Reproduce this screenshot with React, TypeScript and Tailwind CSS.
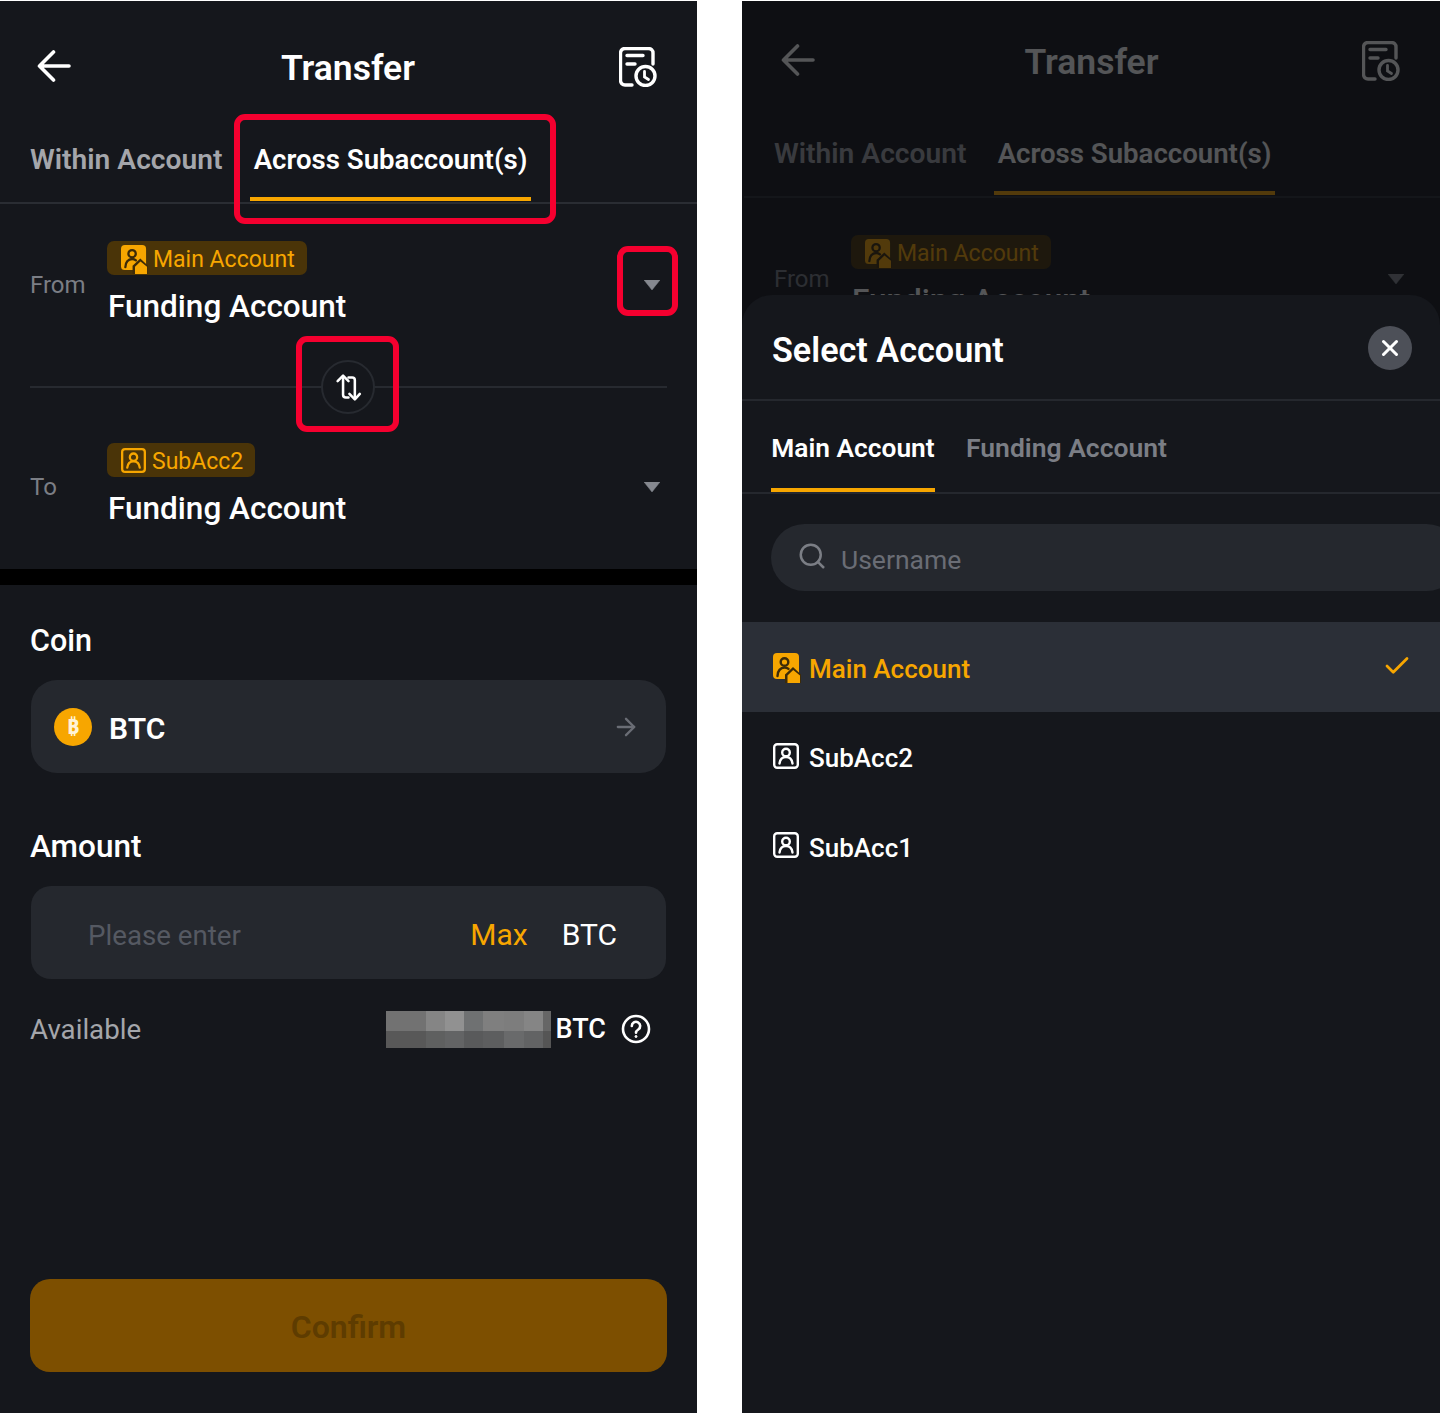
import React from 'react';
import { ArrowRight, Check, Search, X } from 'lucide-react';

const font = { fontFamily: 'Roboto, "Noto Sans", sans-serif' };

function MainAccountIcon({ className = '' }: { className?: string }) {
  return (
    <svg viewBox="0 0 28 30" className={className} fill="none">
      <rect x="0" y="0" width="26" height="26" rx="4" fill="#f7a600" />
      <circle cx="11.5" cy="9" r="3.8" stroke="#3d2b08" strokeWidth="2.4" />
      <path d="M4.5 23c0-5 3-8.500 7-8.500 1.600 0 3 .5 4 1.400" stroke="#3d2b08" strokeWidth="2.4" strokeLinecap="round" />
      <path d="M12 21.500 20 14l8 7.500V30H12z" fill="#3d2b08" />
      <path d="M14.500 22.500 20.200 17 27 22.500V30H14.500z" fill="#f7a600" />
    </svg>
  );
}

function SubAccountIcon({ className = '' }: { className?: string }) {
  return (
    <svg viewBox="0 0 26 26" className={className} fill="none" stroke="currentColor" strokeWidth="2.4">
      <rect x="1.2" y="1.2" width="23.6" height="23.6" rx="3" />
      <circle cx="13" cy="9.5" r="3.8" />
      <path d="M6.500 20.500c.5-4 3-6.500 6.500-6.500s6 2.500 6.500 6.500" strokeLinecap="round" />
    </svg>
  );
}

function HistoryIcon({ className = '' }: { className?: string }) {
  return (
    <svg viewBox="0 0 38 40" className={className} fill="none" stroke="currentColor" strokeWidth="3.4">
      <path d="M13 38H6a4.500 4.500 0 0 1-4.500-4.500V6A4.500 4.500 0 0 1 6 1.500h23.500A4.500 4.500 0 0 1 34 6v11" strokeLinecap="round" />
      <path d="M8 8.500h16M8 17h8" strokeLinecap="round" />
      <circle cx="26.500" cy="29" r="9.500" />
      <path d="M25.500 24.500V30l4 2.500" strokeWidth="2.800" strokeLinecap="round" />
    </svg>
  );
}

function BackArrow() {
  return (
    <svg viewBox="0 0 34 32" className="w-[34px] h-[32px] -mt-[2px]" fill="none" stroke="currentColor" strokeWidth="3.6" strokeLinecap="round" strokeLinejoin="round">
      <path d="M32 16H3M16.500 2 2.500 16l14 14" />
    </svg>
  );
}

function SwapIcon() {
  return (
    <svg viewBox="0 0 32 32" className="w-[29px] h-[29px]" fill="none" stroke="#fff" strokeWidth="2.800" strokeLinecap="round" strokeLinejoin="round">
      <path d="M4 9l6-6 6 6" />
      <path d="M10 4v20c0 2 1 3 3 3h3" />
      <path d="M17 23l6 6 5.500-6" />
      <path d="M23 28V8c0-2-1-3-3-3h-4" />
    </svg>
  );
}

function Triangle() {
  return (
    <svg viewBox="0 0 16 10" className="w-[16px] h-[10px]">
      <path d="M0 0h16L8 10z" fill="#85888f" stroke="#85888f" strokeWidth="0.5" />
    </svg>
  );
}

function RedBox({ className }: { className: string }) {
  return <div className={`absolute border-[6px] border-[#f5002f] rounded-[11px] ${className}`} />;
}

function AccountRow({
  label,
  badge,
  main,
  nameClass,
}: {
  label: string;
  badge: string;
  main?: boolean;
  nameClass: string;
}) {
  return (
    <div className="flex pl-[30px] pr-[37px] relative h-[96px]">
      <div className="w-[77px] pt-[30px] text-[24px] leading-[28px] text-[#7b7e85]">{label}</div>
      <div className="flex-1">
        <div className="inline-flex items-center h-[34px] pl-[14px] pr-[12px] rounded-[7px] bg-[#4a3408] text-[#f7a600] text-[23px] leading-none">
          {main ? (
            <MainAccountIcon className="w-[27px] h-[29px] mr-[5px] mt-[3px]" />
          ) : (
            <SubAccountIcon className="w-[25px] h-[25px] mr-[6px]" />
          )}
          <span className="mt-[3px]">{badge}</span>
        </div>
        <div className={`ml-px text-[31.500px] leading-[36px] font-medium text-white ${nameClass}`}>Funding Account</div>
      </div>
      <div className="pt-[39px]">
        <Triangle />
      </div>
    </div>
  );
}

function TopSection({ top }: { top: string }) {
  return (
    <>
      <div className={`flex items-center justify-between pl-[37px] pr-[40px] h-[66px] text-white ${top}`}>
        <BackArrow />
        <div className="text-[35.500px] font-semibold leading-none ml-[6px] mt-[3px]">Transfer</div>
        <HistoryIcon className="w-[38px] h-[40px]" />
      </div>
      <div className="flex h-[89px] mt-[15px] pl-[30px] border-b-2 border-[#2a2d33]">
        <div className="w-[220px] pt-[29px] text-[28.200px] leading-[32px] font-semibold text-[#a4a6ab]">Within Account</div>
        <div className="w-[281px] pt-[29px] text-center border-b-[4px] border-[#f7a600] mb-[1px] text-[27.600px] leading-[32px] font-semibold text-white">
          Across Subaccount(s)
        </div>
      </div>
    </>
  );
}

function Mosaic() {
  const top = ['bg-[#727272]', 'bg-[#858585]', 'bg-[#919191]', 'bg-[#6f7172]', 'bg-[#7f7f7f]', 'bg-[#7d7d7d]', 'bg-[#858585]', 'bg-[#666666]'];
  const bottom = ['bg-[#585858]', 'bg-[#5f6060]', 'bg-[#636465]', 'bg-[#595a5b]', 'bg-[#5d5e5f]', 'bg-[#696a6b]', 'bg-[#626364]', 'bg-[#555555]'];
  return (
    <div className="grid grid-cols-[40px_19px_19px_19px_21px_20px_19px_8px] grid-rows-[20px_17px] w-[165px] h-[37px]">
      {[...top, ...bottom].map((c, i) => (
        <div key={i} className={c} />
      ))}
    </div>
  );
}

function SheetRow({ name, selected }: { name: string; selected?: boolean }) {
  return (
    <div className={`flex items-center h-[89.500px] pl-[31px] pr-[28px] ${selected ? 'bg-[#2b2f37]' : ''}`}>
      {selected ? (
        <MainAccountIcon className="w-[28px] h-[30px] mr-[8px] mt-[2px]" />
      ) : (
        <SubAccountIcon className="w-[26px] h-[26px] mr-[10px] mb-[1px] text-white" />
      )}
      <span className={`text-[26px] font-medium mt-[5px] ${selected ? 'text-[#f7a600]' : 'text-white'}`}>{name}</span>
      {selected && <Check size={30} strokeWidth={2.2} color="#f7a600" className="ml-auto mb-[2px]" />}
    </div>
  );
}

export default function App() {
  return (
    <div style={font} className="w-[1440px] h-[1414px] bg-white flex justify-between overflow-hidden">
      {/* left screen */}
      <div className="relative w-[697px] h-[1412px] mt-px bg-[#15171c]">
        <TopSection top="mt-[33px]" />
        <RedBox className="left-[234px] top-[113px] w-[322px] h-[110px]" />

        <div className="pt-[37px]">
          <AccountRow label="From" badge="Main Account" main nameClass="mt-[8px]" />
        </div>
        <RedBox className="left-[617px] top-[245px] w-[61px] h-[70px]" />

        <div className="relative mx-[30px] mt-[49px] h-[2px] bg-[#272a30]">
          <div className="absolute left-[291px] top-[-26px] w-[54px] h-[54px] rounded-full border-2 border-[#272a30] bg-[#15171c] flex items-center justify-center">
            <SwapIcon />
          </div>
        </div>
        <RedBox className="left-[296px] top-[335px] w-[103px] h-[96px]" />

        <div className="pt-[55px]">
          <AccountRow label="To" badge="SubAcc2" nameClass="mt-[11px]" />
        </div>

        <div className="mt-[30px] h-[16px] bg-black" />

        <div className="px-[30px]">
          <div className="pt-[38px] text-[30.500px] leading-[36px] font-medium text-white">Coin</div>
          <div className="mt-[21px] ml-px mr-[1px] h-[93px] rounded-[26px] bg-[#25282e] flex items-center pl-[23px] pr-[26px]">
            <div className="w-[38px] h-[38px] rounded-full bg-[#f7a600] flex items-center justify-center text-[#fff3d6] font-bold text-[22px] leading-none">
              ₿
            </div>
            <div className="ml-[17px] mt-[3px] text-[30px] font-semibold text-white">BTC</div>
            <ArrowRight size={28} strokeWidth={2} color="#6a6d75" className="ml-auto" />
          </div>

          <div className="mt-[56px] text-[31.500px] leading-[36px] font-medium text-white">Amount</div>
          <div className="mt-[21px] ml-px mr-[1px] h-[93px] rounded-[20px] bg-[#25282e] flex items-center pl-[57px] pr-[49px]">
            <div className="text-[27.700px] text-[#555962] mt-[7px]">Please enter</div>
            <div className="ml-auto mt-[3px] text-[30px] text-[#f7a600]">Max</div>
            <div className="ml-[34px] mt-[3px] text-[30px] text-white">BTC</div>
          </div>

          <div className="mt-[32px] flex items-center h-[37px]">
            <div className="text-[27.700px] text-[#a4a6ab]">Available</div>
            <div className="ml-auto">
              <Mosaic />
            </div>
            <div className="ml-[5px] text-[27px] font-medium text-white">BTC</div>
            <svg viewBox="0 0 30 30" className="w-[30px] h-[30px] ml-[15px] mr-[16px] -mt-[2px]" fill="none" stroke="#fff" strokeWidth="2.600">
              <circle cx="15" cy="15" r="13" />
              <path d="M10.800 12a4.200 4.200 0 1 1 6.500 3.500c-1.500 1-2.300 1.700-2.300 3.200" strokeLinecap="round" />
              <circle cx="15" cy="22.500" r="1" fill="#fff" strokeWidth="1" />
            </svg>
          </div>

          <div className="mt-[231px] pt-[3px] h-[93px] rounded-[20px] bg-[#7d4f00] flex items-center justify-center text-[32px] font-semibold text-[#5e3c00]">
            Confirm
          </div>
        </div>
      </div>

      {/* right screen */}
      <div className="relative w-[698px] h-[1412px] mt-px bg-[#15171c] overflow-hidden">
        <div className="pl-[2px]">
          <TopSection top="mt-[27px]" />
          <div className="pt-[37px] w-[697px]">
            <AccountRow label="From" badge="Main Account" main nameClass="mt-[8px]" />
          </div>
        </div>
        <div className="absolute inset-0 bg-[#0c0d0f]/70" />

        <div className="absolute left-0 right-0 top-[294px] bottom-0 rounded-t-[30px] bg-[#15171c]">
          <div className="flex items-center justify-between h-[106px] pl-[30px] pr-[28px] border-b-2 border-[#25282e]">
            <div className="mt-[7px] text-[34.200px] font-semibold text-white">Select Account</div>
            <div className="w-[44px] h-[44px] rounded-full bg-[#4d5058] flex items-center justify-center mt-[2px]">
              <X size={26} strokeWidth={2.8} color="#fff" />
            </div>
          </div>
          <div className="flex h-[93px] pl-[29px] border-b-2 border-[#25282e]">
            <div className="pt-[31px] h-[91px] w-[164px] text-center whitespace-nowrap border-b-[4px] border-[#f7a600] text-[26.300px] leading-[32px] font-semibold text-white">
              Main Account
            </div>
            <div className="pt-[31px] ml-[31px] whitespace-nowrap text-[26.500px] leading-[32px] font-semibold text-[#7b7e85]">Funding Account</div>
          </div>
          <div className="mt-[30px] ml-[29px] mr-[-20px] h-[67px] rounded-full bg-[#25282e] flex items-center pl-[26px]">
            <Search size={30} strokeWidth={2} color="#7b7e85" className="mb-[4px]" />
            <div className="ml-[14px] mt-[4px] text-[26.500px] text-[#6a6d75]">Username</div>
          </div>
          <div className="mt-[31px]">
            <SheetRow name="Main Account" selected />
            <SheetRow name="SubAcc2" />
            <SheetRow name="SubAcc1" />
          </div>
        </div>
      </div>
    </div>
  );
}
